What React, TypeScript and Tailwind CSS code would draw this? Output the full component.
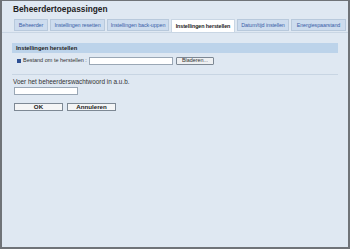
import React from 'react';

const tabs = [
  { label: 'Beheerder', w: 'w-[34px]', active: false },
  { label: 'Instellingen resetten', w: 'w-[55px]', active: false },
  { label: 'Instellingen back-uppen', w: 'w-[62px]', active: false },
  { label: 'Instellingen herstellen', w: 'w-[64px]', active: true },
  { label: 'Datum/tijd instellen', w: 'w-[52px]', active: false },
  { label: 'Energiespaarstand', w: 'w-[55px]', active: false },
];

export default function App() {
  return (
    <div className="w-[350px] h-[249px] overflow-hidden bg-[#dfe8f2] border-l-2 border-r-2 border-b-2 border-t border-[#6f7378] font-['Liberation_Sans',Arial,sans-serif] text-[#333]">
      <div className="pl-[11px] pt-[2px] h-[18px]">
        <h1 className="text-[8.3px] font-bold text-[#222] leading-[12px]">Beheerdertoepassingen</h1>
      </div>
      <div className="flex items-end gap-[2px] pl-[12px] border-b border-[#c9d6e4]">
        {tabs.map((t) => (
          <div
            key={t.label}
            className={
              t.active
                ? `${t.w} h-[13px] flex items-center justify-center bg-white border border-[#c9d6e4] border-b-0 text-[5.4px] font-bold text-[#222] whitespace-nowrap tracking-[-0.1px]`
                : `${t.w} h-[12px] mb-[1px] flex items-center justify-center bg-[#cddcee] border border-[#b8c9dc] text-[5.4px] text-[#3b5fa8] whitespace-nowrap tracking-[-0.1px]`
            }
          >
            {t.label}
          </div>
        ))}
      </div>
      <div className="px-[10px] pt-[10px]">
        <div className="h-[10px] bg-[#bcd3ea] flex items-center pl-[4px] text-[5.8px] font-bold text-[#222]">
          Instellingen herstellen
        </div>
        <div className="flex items-center h-[15px] pl-[5px] text-[5.5px] text-[#333]">
          <span className="w-[4px] h-[4px] bg-[#2d4f93] mr-[2px]" />
          <span className="w-[66px] whitespace-nowrap">Bestand om te herstellen :</span>
          <div className="w-[84px] h-[8px] bg-white border border-[#9aa7b5]" />
          <button className="ml-[3px] w-[38px] h-[8px] bg-[#eef0f2] border border-[#7d8894] rounded-[1px] text-[5.4px] text-[#333] leading-none">
            Bladeren...
          </button>
        </div>
        <div className="mt-[6px] h-[1px] bg-[#c8d5e3]" />
        <div className="pl-[1px] pt-[3px] text-[6.4px] text-[#333] leading-[8px] whitespace-nowrap">Voer het beheerderswachtwoord in a.u.b.</div>
        <div className="ml-[2px] mt-[1px] w-[64px] h-[8px] bg-white border border-[#9aa7b5]" />
        <div className="ml-[2px] mt-[8px] flex gap-[4px]">
          <button className="w-[49px] h-[8px] bg-[#f4f5f6] border border-[#7d8894] text-[6.2px] text-[#222] font-bold leading-none">OK</button>
          <button className="w-[49px] h-[8px] bg-[#f4f5f6] border border-[#7d8894] text-[6.2px] text-[#222] font-bold leading-none">Annuleren</button>
        </div>
      </div>
    </div>
  );
}
